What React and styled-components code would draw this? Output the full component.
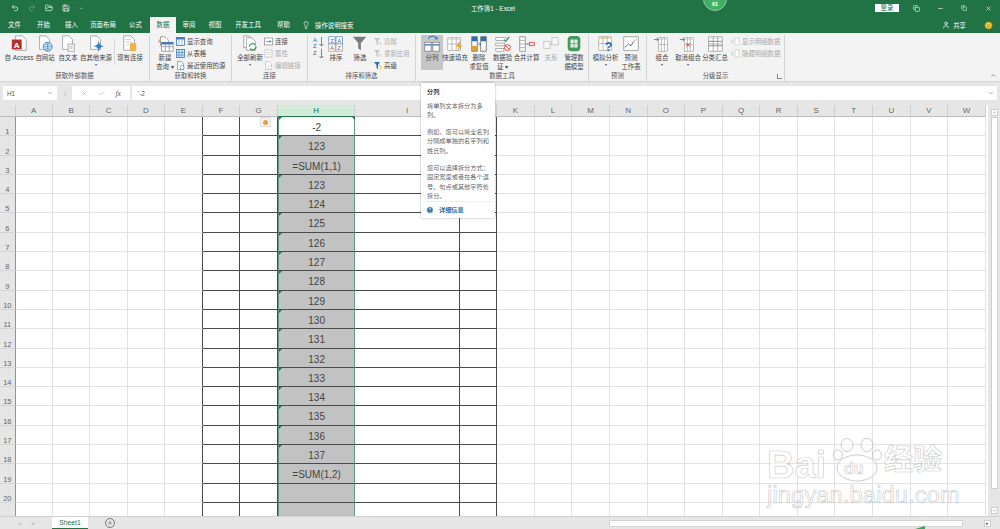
import React from 'react';
import styled, { createGlobalStyle } from 'styled-components';
import { Lightbulb, User, Minus, X, Copy, ChevronUp, ChevronDown, Check, Save, Undo2, Redo2, FolderOpen, Smile, Plus, HelpCircle } from 'lucide-react';

const GREEN = '#217346';
const FONT = `"Liberation Sans", "Noto Sans CJK SC", sans-serif`;

const Global = createGlobalStyle`
  html, body { margin: 0; padding: 0; background: #fff; }
  body { font-family: ${FONT}; }
`;

const Page = styled.div`
  position: relative;
  width: 1000px;
  height: 529px;
  overflow: hidden;
  display: flex;
  flex-direction: column;
  font-family: ${FONT};
`;

/* title bar */
const TitleBar = styled.div`
  position: relative;
  height: 16px;
  background: ${GREEN};
  color: #fff;
  display: flex;
  align-items: center;
  font-size: 6.4px;
`;
const Quick = styled.div`
  display: flex;
  align-items: center;
  gap: 9px;
  padding-left: 11px;
  width: 440px;
  box-sizing: border-box;
`;
const Title = styled.div`
  width: 106px;
  text-align: center;
  margin-right: auto;
`;
const Login = styled.div`
  background: #fff;
  color: ${GREEN};
  width: 24px;
  height: 8px;
  line-height: 8px;
  text-align: center;
  margin-right: 5px;
`;
const WinBtn = styled.div`
  width: 24px;
  display: flex;
  justify-content: center;
`;
const Badge = styled.div`
  position: absolute;
  left: 703px;
  top: -13px;
  width: 24px;
  height: 24px;
  border-radius: 50%;
  background: radial-gradient(circle at 50% 70%, #4cb86a, #2f9c53);
  border: 1px solid #8fd0a0;
  box-sizing: border-box;
  color: #fff;
  font-size: 5.5px;
  font-weight: bold;
  text-align: center;
  padding-top: 13px;
  line-height: 7px;
`;

/* tabs */
const TabRow = styled.div`
  height: 17px;
  background: ${GREEN};
  display: flex;
  align-items: flex-end;
  color: #fff;
  font-size: 6.4px;
`;
const Tab = styled.div`
  width: ${p => p.$w}px;
  height: 16px;
  line-height: 16px;
  text-align: center;
  white-space: nowrap;
  background: ${p => (p.$active ? '#f3f3f3' : 'transparent')};
  color: ${p => (p.$active ? GREEN : '#fff')};
`;
const SearchHint = styled.div`
  display: flex;
  align-items: center;
  gap: 5px;
  height: 16px;
  padding-left: 3px;
  flex: 1;
`;
const Share = styled.div`
  display: flex;
  align-items: center;
  gap: 3px;
  height: 16px;
  margin-right: ${p => p.$gap}px;
`;

/* ribbon */
const Ribbon = styled.div`
  height: 49px;
  background: #f3f3f3;
  display: flex;
  position: relative;
  color: #444;
  font-size: 6.4px;
  border-bottom: 1px solid #d6d6d6;
  box-sizing: border-box;
`;
const Group = styled.div`
  width: ${p => p.$w}px;
  height: 46px;
  margin-top: 2px;
  box-sizing: border-box;
  border-right: 1px solid #d4d4d4;
  display: flex;
  flex-direction: column;
  position: relative;
`;
const GroupBody = styled.div`
  height: 35px;
  flex: none;
  display: flex;
  align-items: flex-start;
  padding-left: ${p => p.$pad || 0}px;
`;
const GroupLabel = styled.div`
  height: 11px;
  line-height: 11px;
  text-align: center;
  color: #555;
`;
const Big = styled.div`
  width: ${p => p.$w}px;
  height: 35px;
  flex: none;
  display: flex;
  flex-direction: column;
  align-items: center;
  white-space: nowrap;
  line-height: 9px;
  background: ${p => (p.$active ? '#c6c6c6' : 'transparent')};
  color: ${p => (p.$off ? '#a8a8a8' : '#444')};
  svg { flex: none; width: 18px; height: 18px; }
`;
const Caret = styled.span`
  font-size: 4px;
  line-height: 6px;
  color: #555;
`;
const SmallList = styled.div`
  display: flex;
  flex-direction: column;
  padding-left: ${p => p.$pad || 0}px;
`;
const SmallItem = styled.div`
  height: 12px;
  display: flex;
  align-items: center;
  gap: 2px;
  white-space: nowrap;
  color: ${p => (p.$off ? '#ababab' : '#444')};
`;
const Divider = styled.div`
  width: 1px;
  height: 26px;
  margin: 4px 1px 0 3px;
  background: #d8d8d8;
  flex: none;
`;
const Launcher = styled.div`
  position: absolute;
  right: 2px;
  bottom: 2px;
  width: 4px;
  height: 4px;
  border-left: 1px solid #888;
  border-bottom: 1px solid #888;
`;
const Collapse = styled.div`
  position: absolute;
  right: 3px;
  bottom: 2px;
  color: #555;
  display: flex;
`;

/* formula bar */
const FormulaBar = styled.div`
  height: 23px;
  background: #e6e6e6;
  display: flex;
  align-items: center;
  box-sizing: border-box;
  padding: 0 3px 1px;
  font-size: 6.4px;
  color: #555;
`;
const NameBox = styled.div`
  width: 54px;
  height: 14px;
  background: #fff;
  display: flex;
  align-items: center;
  justify-content: space-between;
  padding: 0 4px;
  box-sizing: border-box;
`;
const Dots = styled.div`
  width: 15px;
  text-align: center;
  color: #aaa;
`;
const FxBox = styled.div`
  width: 58px;
  height: 14px;
  background: #fff;
  display: flex;
  align-items: center;
  justify-content: space-around;
  padding: 0 4px;
  box-sizing: border-box;
  color: #aaa;
  margin-right: 2px;
`;
const Fx = styled.span`
  font-family: "Liberation Serif", serif;
  font-style: italic;
  color: #555;
  font-size: 7.5px;
`;
const FormulaInput = styled.div`
  flex: 1;
  height: 14px;
  background: #fff;
  display: flex;
  align-items: center;
  justify-content: space-between;
  padding: 0 3px 0 6px;
  box-sizing: border-box;
`;

/* sheet */
const Middle = styled.div`
  flex: 1;
  display: flex;
  min-height: 0;
  background: #fff;
  position: relative;
`;
const Sheet = styled.div`
  width: 988px;
  height: 411px;
  overflow: hidden;
  display: grid;
  grid-template-columns: 15.6px repeat(5, 37.4px) 37.6px 38px 77px 105px 37px repeat(13, 37.6px);
  grid-template-rows: 12px repeat(21, 19.3px);
  align-content: start;
`;
const Corner = styled.div`
  background: #e6e6e6;
  border-right: 1px solid #cfcfcf;
  border-bottom: 1px solid #bdbdbd;
`;
const ColHead = styled.div`
  background: ${p => (p.$on ? '#d2ecd9' : '#e6e6e6')};
  color: ${p => (p.$on ? GREEN : '#666')};
  border-right: 1px solid #cfcfcf;
  border-bottom: 1px solid ${p => (p.$on ? GREEN : '#bdbdbd')};
  font-size: 8px;
  line-height: 11px;
  text-align: center;
`;
const RowHead = styled.div`
  background: #e6e6e6;
  color: #666;
  border-right: 1px solid #6fa98a;
  border-bottom: 1px solid #d4d4d4;
  font-size: 7.5px;
  display: flex;
  align-items: flex-end;
  justify-content: center;
  box-sizing: border-box;
  line-height: 6px;
`;
const Cell = styled.div`
  position: relative;
  box-sizing: border-box;
  border-right: 1px solid ${p => (p.$dark || p.$edge ? '#4a4a4a' : '#e2e2e2')};
  border-bottom: ${p => (p.$dark ? '1.5px solid #4a4a4a' : '1px solid #e2e2e2')};
`;
const SelCell = styled.div`
  position: relative;
  box-sizing: border-box;
  background: ${p => (p.$blank ? '#fff' : '#c2c2c2')};
  border-left: 1.5px solid #5f9d7d;
  border-right: 1.5px solid #5f9d7d;
  border-bottom: 1.5px solid #4a4a4a;
  color: #444;
  font-size: 10px;
  text-align: center;
  line-height: 21px;
  &::before {
    content: '';
    display: ${p => (p.$mark ? 'block' : 'none')};
    position: absolute;
    left: 0;
    top: 0;
    border-top: 3px solid #1f7a45;
    border-right: 3px solid transparent;
  }
`;
const Handle = styled.span`
  position: absolute;
  right: -1px;
  top: 0;
  width: 0;
  border-top: 3px solid #1f7a45;
  border-left: 3px solid transparent;
`;
const SmartTag = styled.div`
  position: absolute;
  right: 6px;
  top: 0;
  width: 11px;
  height: 10px;
  background: #f4f4f4;
  border: 1px solid #ddd;
  box-sizing: border-box;
  display: flex;
  align-items: center;
  justify-content: center;
  &::after {
    content: '';
    width: 5px;
    height: 5px;
    border-radius: 50%;
    background: #e8a23c;
  }
`;

/* scrollbars */
const VScroll = styled.div`
  width: 12px;
  height: 411px;
  background: #e6e6e6;
  display: flex;
  flex-direction: column;
  align-items: center;
  padding-top: 4px;
  box-sizing: border-box;
`;
const ScrollBtn = styled.div`
  width: 7px;
  height: 7px;
  background: #fff;
  border: 1px solid #cfcfcf;
  box-sizing: border-box;
  display: flex;
  align-items: center;
  justify-content: center;
  color: #555;
  flex: none;
  font-size: 5px;
`;
const VThumb = styled.div`
  width: 7px;
  height: 372px;
  background: #fff;
  border: 1px solid #cfcfcf;
  box-sizing: border-box;
  margin: 1px 0 auto;
`;
const VEnd = styled(ScrollBtn)`
  margin-bottom: 2px;
`;

/* sheet tabs */
const SheetBar = styled.div`
  height: 13px;
  background: #e6e6e6;
  border-top: 1px solid #d0d0d0;
  box-sizing: border-box;
  display: flex;
  align-items: stretch;
  font-size: 6.8px;
  color: #999;
`;
const NavArrows = styled.div`
  width: 52px;
  display: flex;
  justify-content: center;
  gap: 11px;
  align-items: center;
  font-size: 5px;
  color: #bbb;
`;
const SheetTab = styled.div`
  width: 36px;
  background: #fff;
  color: ${GREEN};
  text-align: center;
  line-height: 11px;
  border-bottom: 1.5px solid ${GREEN};
  box-sizing: border-box;
`;
const AddSheet = styled.div`
  width: 8px;
  height: 8px;
  border: 1px solid #777;
  border-radius: 50%;
  margin: 1px 0 0 17px;
  display: flex;
  align-items: center;
  justify-content: center;
  color: #555;
`;
const HScrollWrap = styled.div`
  display: flex;
  align-items: center;
  margin-left: auto;
  width: 391px;
  gap: 1px;
  padding-right: 9px;
  box-sizing: border-box;
`;
const HThumb = styled.div`
  width: 354px;
  height: 7px;
  background: #fff;
  border: 1px solid #d4d4d4;
  box-sizing: border-box;
  margin-right: auto;
`;

/* tooltip */
const Tooltip = styled.div`
  position: absolute;
  left: 421px;
  top: 83px;
  width: 74px;
  height: 135px;
  box-sizing: border-box;
  background: #fff;
  box-shadow: 0 0 2px rgba(0, 0, 0, 0.35);
  padding: 4px 6px 0;
  font-size: 6.2px;
  line-height: 9.6px;
  color: #666;
  z-index: 5;
`;
const TipTitle = styled.div`
  font-weight: bold;
  color: #444;
  margin-bottom: 4px;
`;
const TipText = styled.div`
  margin-bottom: 7px;
`;
const TipLink = styled.div`
  position: absolute;
  left: 5px;
  right: 1px;
  bottom: 1px;
  height: 15px;
  border-top: 1px solid #eee;
  display: flex;
  align-items: center;
  gap: 5px;
  color: #2b6ca8;
  font-weight: bold;
`;

/* watermark */
const Watermark = styled.div`
  position: absolute;
  left: 766px;
  top: 438px;
  width: 184px;
  height: 72px;
  z-index: 4;
  pointer-events: none;
  color: rgba(255, 255, 255, 0.6);
  -webkit-text-stroke: 0.7px rgba(170, 170, 170, 0.6);
`;
const MarkBig = styled.span`
  position: absolute;
  left: ${p => p.$x}px;
  top: ${p => p.$y}px;
  font-size: ${p => p.$s}px;
  font-weight: bold;
  line-height: 0.9;
  white-space: nowrap;
`;
const MarkUrl = styled.span`
  position: absolute;
  left: 1px;
  top: 46px;
  font-size: 23.5px;
  line-height: 1;
  white-space: nowrap;
  letter-spacing: 0.2px;
`;
const PawMark = styled.svg`
  position: absolute;
  left: 67px;
  top: 0;
`;
const GreenTip = styled.div`
  position: absolute;
  left: 915px;
  bottom: 0;
  width: 10px;
  height: 3px;
  background: #3aa757;
  clip-path: polygon(0 100%, 100% 0, 100% 100%);
`;

/* icons */
const Svg = ({ s = 20, h, children }) => (
  <svg width={s} height={h || s} viewBox={`0 0 ${s} ${h || s}`} fill="none">{children}</svg>
);
const Page1 = ({ x = 4, y = 1, w = 11, h = 15 }) => (
  <path d={`M${x} ${y}h${w - 4}l4 4v${h - 4}h-${w}z`} fill="#fff" stroke="#8f8f8f" strokeWidth=".8" />
);
const Grid = ({ x, y, w = 12, h = 10, c = '#7a7a7a', head = '#3a78b5' }) => (
  <g stroke={c} strokeWidth=".7">
    <rect x={x} y={y} width={w} height={h} fill="#fff" />
    <rect x={x} y={y} width={w} height={2.5} fill={head} stroke="none" />
    <path d={`M${x + w / 3} ${y}v${h}M${x + (2 * w) / 3} ${y}v${h}M${x} ${y + h / 2}h${w}`} />
  </g>
);
const AccessIcon = () => (
  <Svg><Page1 x={6} y={1} w={12} h={16} /><rect x="2" y="5" width="11" height="11" fill="#b7322f" />
    <text x="7.5" y="14" fontSize="9" fontWeight="bold" fill="#fff" textAnchor="middle" fontFamily="Liberation Sans">A</text></Svg>
);
const WebIcon = () => (
  <Svg><Page1 /><circle cx="13" cy="13" r="5" fill="#cfe3f4" stroke="#3a78b5" strokeWidth=".9" />
    <path d="M8 13h10M13 8v10M10 9.5c2 2 4 2 6 0M10 16.5c2-2 4-2 6 0" stroke="#3a78b5" strokeWidth=".6" /></Svg>
);
const TextIcon = () => (
  <Svg><Page1 /><rect x="10" y="10" width="7" height="8" fill="#fff" stroke="#8f8f8f" strokeWidth=".8" />
    <path d="M11.5 12.5h4M11.5 14.5h4" stroke="#8f8f8f" strokeWidth=".7" /></Svg>
);
const OtherIcon = () => (
  <Svg><Page1 /><path d="M13 7v11M8 12.5h10" stroke="#2c6fb0" strokeWidth="1" />
    <rect x="10.5" y="10" width="5" height="5" fill="#2c7fc9" transform="rotate(45 13 12.5)" /></Svg>
);
const ExistIcon = () => (
  <Svg><Page1 x={3} y={1} w={12} h={16} /><path d="M5 5h6M5 8h8M5 11h8" stroke="#bbb" strokeWidth=".7" />
    <rect x="10" y="9" width="7" height="9" rx="1.5" fill="#eeb449" /></Svg>
);
const QueryIcon = () => (
  <Svg><path d="M6 1L2 8h3l-1 5 5-7H6l2-5z" fill="#f0a52c" /><Page1 x={5} y={2} w={9} h={10} />
    <Grid x={6} y={8} w={13} h={10} /></Svg>
);
const RefreshIcon = () => (
  <Svg><Page1 x={3} y={1} w={10} h={13} /><Page1 x={6} y={3} w={10} h={14} />
    <path d="M9 13a4 4 0 0 1 7-2M17 13a4 4 0 0 1-7 2" stroke="#3f9a5c" strokeWidth="1.4" /></Svg>
);
const SortSmall = () => (
  <svg width="12" height="24" viewBox="0 0 12 24" fill="none"><text x="0" y="7" fontSize="6" fill="#2c6fb0" fontFamily="Liberation Sans">A</text>
    <text x="0" y="13" fontSize="6" fill="#666" fontFamily="Liberation Sans">Z</text>
    <path d="M8.500 2v9M6.500 9l2 2 2-2" stroke="#555" strokeWidth=".7" />
    <text x="0" y="20" fontSize="6" fill="#666" fontFamily="Liberation Sans">Z</text>
    <path d="M8.500 14v9M6.500 21l2 2 2-2" stroke="#555" strokeWidth=".7" /></svg>
);
const SortBig = () => (
  <Svg><rect x="2" y="2" width="7" height="8" fill="#fff" stroke="#3a78b5" strokeWidth=".7" /><rect x="10" y="2" width="7" height="8" fill="#fff" stroke="#3a78b5" strokeWidth=".7" />
    <rect x="2" y="10" width="7" height="8" fill="#fff" stroke="#888" strokeWidth=".7" /><rect x="10" y="10" width="7" height="8" fill="#fff" stroke="#888" strokeWidth=".7" />
    <text x="5.5" y="8.5" fontSize="6.5" fill="#2c6fb0" textAnchor="middle" fontFamily="Liberation Sans">Z</text><text x="13.5" y="8.5" fontSize="6.5" fill="#2c6fb0" textAnchor="middle" fontFamily="Liberation Sans">A</text>
    <text x="5.5" y="16.5" fontSize="6.5" fill="#666" textAnchor="middle" fontFamily="Liberation Sans">A</text><text x="13.5" y="16.5" fontSize="6.5" fill="#666" textAnchor="middle" fontFamily="Liberation Sans">Z</text></Svg>
);
const FilterIcon = () => (
  <Svg><path d="M2 2h15l-6 7v8l-3-2V9z" fill="#7c7c7c" /></Svg>
);
const SplitIcon = () => (
  <Svg><path d="M6 4a5 5 0 0 1 9 0" stroke="#2c6fb0" strokeWidth="1.2" /><path d="M13 4.5l3 .5.2-3" fill="#2c6fb0" />
    <rect x="2" y="8" width="7" height="10" fill="#fff" stroke="#777" strokeWidth=".8" /><rect x="11" y="8" width="7" height="10" fill="#fff" stroke="#777" strokeWidth=".8" />
    <path d="M2 11h7M11 11h7" stroke="#2c6fb0" strokeWidth="1.4" /></Svg>
);
const FlashIcon = () => (
  <Svg><Grid x={2} y={3} w={14} h={14} c="#999" head="#e0e0e0" /><path d="M15 7l-4 6h3l-1 5 5-7h-3l1-4z" fill="#f0a52c" /></Svg>
);
const DedupeIcon = () => (
  <Svg><rect x="2" y="2" width="6" height="16" fill="#fff" stroke="#555" strokeWidth=".8" /><rect x="12" y="2" width="6" height="16" fill="#fff" stroke="#555" strokeWidth=".8" />
    <path d="M2 2h6v5H2zM12 2h6v5h-6z" fill="#2c6fb0" /><path d="M2 12h6v6H2z" fill="#d8a23a" /><path d="M9 10h3M10.5 8.500L12 10l-1.500 1.500" stroke="#2c6fb0" strokeWidth=".8" /></Svg>
);
const ValidateIcon = () => (
  <Svg><rect x="2" y="3" width="12" height="3" fill="#fff" stroke="#888" strokeWidth=".7" /><rect x="2" y="9" width="10" height="3" fill="#fff" stroke="#888" strokeWidth=".7" /><rect x="2" y="15" width="9" height="3" fill="#fff" stroke="#888" strokeWidth=".7" />
    <path d="M11 5l2 2 4-5" stroke="#3f9a5c" strokeWidth="1.3" /><circle cx="15" cy="14" r="3.2" fill="#fff" stroke="#c8382e" strokeWidth="1" /><path d="M13 12l4 4" stroke="#c8382e" /></Svg>
);
const ConsolidateIcon = () => (
  <Svg><rect x="2" y="2" width="6" height="16" fill="#fff" stroke="#777" strokeWidth=".8" /><path d="M2 6h6M2 10h6M2 14h6" stroke="#777" strokeWidth=".6" />
    <path d="M9 10h3" stroke="#2c6fb0" /><rect x="12.5" y="8" width="6" height="4" fill="#f7d4d0" stroke="#c8382e" strokeWidth=".7" /></Svg>
);
const RelationIcon = () => (
  <Svg><rect x="2" y="7" width="7" height="8" fill="#f6f6f6" stroke="#bbb" strokeWidth=".8" /><rect x="11" y="3" width="7" height="8" fill="#f6f6f6" stroke="#bbb" strokeWidth=".8" /><path d="M9 10h2" stroke="#bbb" /></Svg>
);
const ModelIcon = () => (
  <Svg><rect x="3" y="1" width="14" height="17" rx="4" fill="#3f9a5c" /><rect x="6" y="5" width="8" height="9" fill="#dff0e3" /><path d="M10 5v9M6 9.500h8" stroke="#3f9a5c" strokeWidth=".7" /></Svg>
);
const WhatIfIcon = () => (
  <Svg><Grid x={2} y={2} w={14} h={15} c="#999" head="#e9d9a8" /><text x="13" y="18" fontSize="14" fontWeight="bold" fill="#2c6fb0" textAnchor="middle" fontFamily="Liberation Sans">?</text></Svg>
);
const ForecastIcon = () => (
  <Svg><rect x="2" y="2" width="16" height="15" fill="#fff" stroke="#888" strokeWidth=".8" /><path d="M3 14l4-4 3 2 3-5" stroke="#2c6fb0" strokeWidth="1" /><path d="M13 7l4-3" stroke="#d0554a" strokeWidth="1" strokeDasharray="1.5 1" /></Svg>
);
const GroupIcon = ({ red }) => (
  <Svg><Grid x={6} y={3} w={10} h={15} c="#999" head="#e6e6e6" /><path d="M1 5h5M4 3l2 2-2 2" stroke="#3f9a5c" strokeWidth="1" />
    {red && <path d="M8 9l4 4M12 9l-4 4" stroke="#c8382e" strokeWidth="1" />}</Svg>
);
const SubtotalIcon = () => (
  <Svg><Grid x={3} y={2} w={15} h={16} c="#888" head="#e6e6e6" /><path d="M3 7h15M3 12h15" stroke="#666" strokeWidth=".8" /></Svg>
);
const Mini = ({ kind, off }) => {
  const c = off ? '#bbb' : '#3a78b5';
  if (kind === 'grid') return <Svg s={9}><rect x=".5" y=".5" width="8" height="8" fill="#fff" stroke={c} strokeWidth=".8" /><rect x=".5" y=".5" width="8" height="2" fill={c} /><path d="M3 3v5M6 3v5" stroke={c} strokeWidth=".5" /></Svg>;
  if (kind === 'table') return <Svg s={9}><rect x=".5" y=".5" width="8" height="8" fill="#dbe8f5" stroke={c} strokeWidth=".8" /><path d="M3 1v7M6 1v7M1 3.500h7M1 6h7" stroke={c} strokeWidth=".6" /></Svg>;
  if (kind === 'doc') return <Svg s={9}><path d="M1.500.5h4l2 2v6h-6z" fill="#fff" stroke={off ? '#bbb' : '#888'} strokeWidth=".7" /><circle cx="6" cy="6.500" r="2" fill="#fff" stroke={c} strokeWidth=".6" /></Svg>;
  if (kind === 'conn') return <Svg s={9}><rect x=".5" y="1" width="8" height="7" fill="#fff" stroke="#888" strokeWidth=".7" /><path d="M2 4.500h5M5.500 3l1.500 1.500L5.500 6" stroke={c} strokeWidth=".7" /></Svg>;
  if (kind === 'prop') return <Svg s={9}><rect x="1" y="1" width="7" height="7" fill="#fff" stroke="#bbb" strokeWidth=".7" /><path d="M2.500 3.500h4M2.500 5.500h4" stroke="#bbb" strokeWidth=".6" /></Svg>;
  if (kind === 'clear') return <Svg s={9}><path d="M1 1h6L5 4v4L3.500 7V4z" fill={off ? '#c4c4c4' : '#777'} /><path d="M6 5l2.500 2.500M8.500 5L6 7.500" stroke={off ? '#c4c4c4' : '#c8382e'} strokeWidth=".7" /></Svg>;
  if (kind === 'adv') return <Svg s={9}><path d="M1 1h6L5 4v4L3.500 7V4z" fill="#2c6fb0" /><path d="M6 4l2.500 2.500-2 2" stroke="#e0a030" strokeWidth=".8" /></Svg>;
  return <Svg s={9}><path d="M1 4.500h2M1 2v5" stroke={off ? '#c4c4c4' : '#777'} strokeWidth=".6" /><rect x="4" y="1" width="4" height="7" fill="#fff" stroke={off ? '#c4c4c4' : '#777'} strokeWidth=".6" /></Svg>;
};

const COLS = 'ABCDEFGHIJKLMNOPQRSTUVW'.split('');
const VALUES = ['-2', '123', '=SUM(1,1)', '123', '124', '125', '126', '127', '128', '129', '130', '131', '132', '133', '134', '135', '136', '137', '=SUM(1,2)', '', ''];
const NO_MARK = [3, 5, 19, 20, 21];

const BigBtn = ({ w, icon, lines, caret, active, off }) => (
  <Big $w={w} $active={active} $off={off}>
    {icon}
    {lines.map(l => <span key={l}>{l}</span>)}
    {caret && <Caret>▾</Caret>}
  </Big>
);

const Small = ({ kind, off, children }) => (
  <SmallItem $off={off}><Mini kind={kind} off={off} />{children}</SmallItem>
);

export default function App() {
  return (
    <Page>
      <Global />
      <TitleBar>
        <Quick>
          <Undo2 size={8} />
          <Redo2 size={8} color="#6fa588" />
          <FolderOpen size={8} />
          <Save size={8} />
          <ChevronDown size={5} />
        </Quick>
        <Title>工作簿1 - Excel</Title>
        <Login>登录</Login>
        <WinBtn><Copy size={7} /></WinBtn>
        <WinBtn><Minus size={7} /></WinBtn>
        <WinBtn><Copy size={6} /></WinBtn>
        <WinBtn><X size={7} /></WinBtn>
        <Badge>61</Badge>
      </TitleBar>

      <TabRow>
        <Tab $w={29}>文件</Tab>
        <Tab $w={29}>开始</Tab>
        <Tab $w={27}>插入</Tab>
        <Tab $w={36}>页面布局</Tab>
        <Tab $w={29}>公式</Tab>
        <Tab $w={26} $active>数据</Tab>
        <Tab $w={26}>审阅</Tab>
        <Tab $w={26}>视图</Tab>
        <Tab $w={40}>开发工具</Tab>
        <Tab $w={31}>帮助</Tab>
        <SearchHint><Lightbulb size={8} />操作说明搜索</SearchHint>
        <Share $gap={18}><User size={8} />共享</Share>
        <Share $gap={7}><Smile size={9} color="#7a6a10" fill="#f0d040" /></Share>
      </TabRow>

      <Ribbon>
        <Group $w={150}>
          <GroupBody $pad={3}>
            <BigBtn w={32} icon={<AccessIcon />} lines={['自 Access']} />
            <BigBtn w={20} icon={<WebIcon />} lines={['自网站']} />
            <BigBtn w={26} icon={<TextIcon />} lines={['自文本']} />
            <BigBtn w={30} icon={<OtherIcon />} lines={['自其他来源']} caret />
            <Divider />
            <BigBtn w={28} icon={<ExistIcon />} lines={['现有连接']} />
          </GroupBody>
          <GroupLabel>获取外部数据</GroupLabel>
        </Group>
        <Group $w={82}>
          <GroupBody $pad={4}>
            <BigBtn w={22} icon={<QueryIcon />} lines={['新建', '查询 ▾']} />
            <SmallList>
              <Small kind="grid">显示查询</Small>
              <Small kind="table">从表格</Small>
              <Small kind="doc">最近使用的源</Small>
            </SmallList>
          </GroupBody>
          <GroupLabel>获取和转换</GroupLabel>
        </Group>
        <Group $w={76}>
          <GroupBody $pad={5}>
            <BigBtn w={26} icon={<RefreshIcon />} lines={['全部刷新']} caret />
            <SmallList $pad={1}>
              <Small kind="conn">连接</Small>
              <Small kind="prop" off>属性</Small>
              <Small kind="doc" off>编辑链接</Small>
            </SmallList>
          </GroupBody>
          <GroupLabel>连接</GroupLabel>
        </Group>
        <Group $w={108}>
          <GroupBody $pad={5}>
            <SortSmall />
            <BigBtn w={22} icon={<SortBig />} lines={['排序']} />
            <BigBtn w={26} icon={<FilterIcon />} lines={['筛选']} />
            <SmallList>
              <Small kind="clear" off>清除</Small>
              <Small kind="clear" off>重新应用</Small>
              <Small kind="adv">高级</Small>
            </SmallList>
          </GroupBody>
          <GroupLabel>排序和筛选</GroupLabel>
        </Group>
        <Group $w={173}>
          <GroupBody $pad={5}>
            <BigBtn w={22} icon={<SplitIcon />} lines={['分列']} active />
            <BigBtn w={24} icon={<FlashIcon />} lines={['快速填充']} />
            <BigBtn w={24} icon={<DedupeIcon />} lines={['删除', '重复值']} />
            <BigBtn w={23} icon={<ValidateIcon />} lines={['数据验', '证 ▾']} />
            <BigBtn w={25} icon={<ConsolidateIcon />} lines={['合并计算']} />
            <BigBtn w={24} icon={<RelationIcon />} lines={['关系']} off />
            <BigBtn w={22} icon={<ModelIcon />} lines={['管理数', '据模型']} />
          </GroupBody>
          <GroupLabel>数据工具</GroupLabel>
        </Group>
        <Group $w={58}>
          <GroupBody $pad={3}>
            <BigBtn w={27} icon={<WhatIfIcon />} lines={['模拟分析']} caret />
            <BigBtn w={24} icon={<ForecastIcon />} lines={['预测', '工作表']} />
          </GroupBody>
          <GroupLabel>预测</GroupLabel>
        </Group>
        <Group $w={138}>
          <GroupBody $pad={3}>
            <BigBtn w={24} icon={<GroupIcon />} lines={['组合']} caret />
            <BigBtn w={28} icon={<GroupIcon red />} lines={['取消组合']} caret />
            <BigBtn w={26} icon={<SubtotalIcon />} lines={['分类汇总']} />
            <SmallList $pad={3}>
              <Small kind="row" off>显示明细数据</Small>
              <Small kind="row" off>隐藏明细数据</Small>
            </SmallList>
          </GroupBody>
          <GroupLabel>分级显示</GroupLabel>
          <Launcher />
        </Group>
        <Collapse><ChevronUp size={7} /></Collapse>
      </Ribbon>

      <FormulaBar>
        <NameBox>H1<ChevronDown size={6} /></NameBox>
        <Dots>⋮</Dots>
        <FxBox><X size={7} /><Check size={7} /><Fx>fx</Fx></FxBox>
        <FormulaInput>'-2<ChevronDown size={6} /></FormulaInput>
      </FormulaBar>

      <Middle>
        <Sheet>
          <Corner />
          {COLS.map(c => <ColHead key={c} $on={c === 'H'}>{c === 'J' ? '' : c}</ColHead>)}
          {VALUES.map((v, i) => (
            <React.Fragment key={i}>
              <RowHead>{i < 20 ? i + 1 : ''}</RowHead>
              {COLS.map(c => {
                if (c === 'H') {
                  return (
                    <SelCell key={c} $blank={i === 0} $mark={!NO_MARK.includes(i + 1)}>
                      {v}
                      {i === 0 && <Handle />}
                    </SelCell>
                  );
                }
                return (
                  <Cell key={c} $dark={'FGIJ'.includes(c)} $edge={c === 'E'}>
                    {c === 'G' && i === 0 && <SmartTag />}
                  </Cell>
                );
              })}
            </React.Fragment>
          ))}
        </Sheet>
        <VScroll>
          <ScrollBtn><ChevronUp size={5} /></ScrollBtn>
          <VThumb />
          <VEnd><ChevronDown size={5} /></VEnd>
        </VScroll>
      </Middle>

      <SheetBar>
        <NavArrows><span>◂</span><span>▸</span></NavArrows>
        <SheetTab>Sheet1</SheetTab>
        <AddSheet><Plus size={6} /></AddSheet>
        <HScrollWrap>
          <HThumb />
          <ScrollBtn>▸</ScrollBtn>
        </HScrollWrap>
      </SheetBar>

      <Tooltip>
        <TipTitle>分列</TipTitle>
        <TipText>将单列文本拆分为多列。</TipText>
        <TipText>例如，您可以将全名列分隔成单独的名字列和姓氏列。</TipText>
        <TipText>您可以选择拆分方式：固定宽度或者在各个逗号、句点或其他字符处拆分。</TipText>
        <TipLink><HelpCircle size={8} color="#fff" fill="#2b6ca8" />详细信息</TipLink>
      </Tooltip>

      <Watermark>
        <MarkBig $x={1} $y={10} $s={38}>Bai</MarkBig>
        <PawMark width="50" height="44" viewBox="0 0 50 44" fill="none" stroke="rgba(170,170,170,.6)" strokeWidth="1">
          <ellipse cx="24" cy="30" rx="20" ry="13" fill="rgba(255,255,255,.5)" />
          <ellipse cx="14" cy="7" rx="6" ry="6.500" fill="rgba(255,255,255,.5)" />
          <ellipse cx="34" cy="7" rx="6" ry="6.500" fill="rgba(255,255,255,.5)" />
          <ellipse cx="5" cy="17" rx="4.500" ry="5" fill="rgba(255,255,255,.5)" />
          <ellipse cx="44" cy="17" rx="4.500" ry="5" fill="rgba(255,255,255,.5)" />
        </PawMark>
        <MarkBig $x={78} $y={24} $s={16}>du</MarkBig>
        <MarkBig $x={118} $y={9} $s={29}>经验</MarkBig>
        <MarkUrl>jingyan.baidu.com</MarkUrl>
      </Watermark>
      <GreenTip />
    </Page>
  );
}
